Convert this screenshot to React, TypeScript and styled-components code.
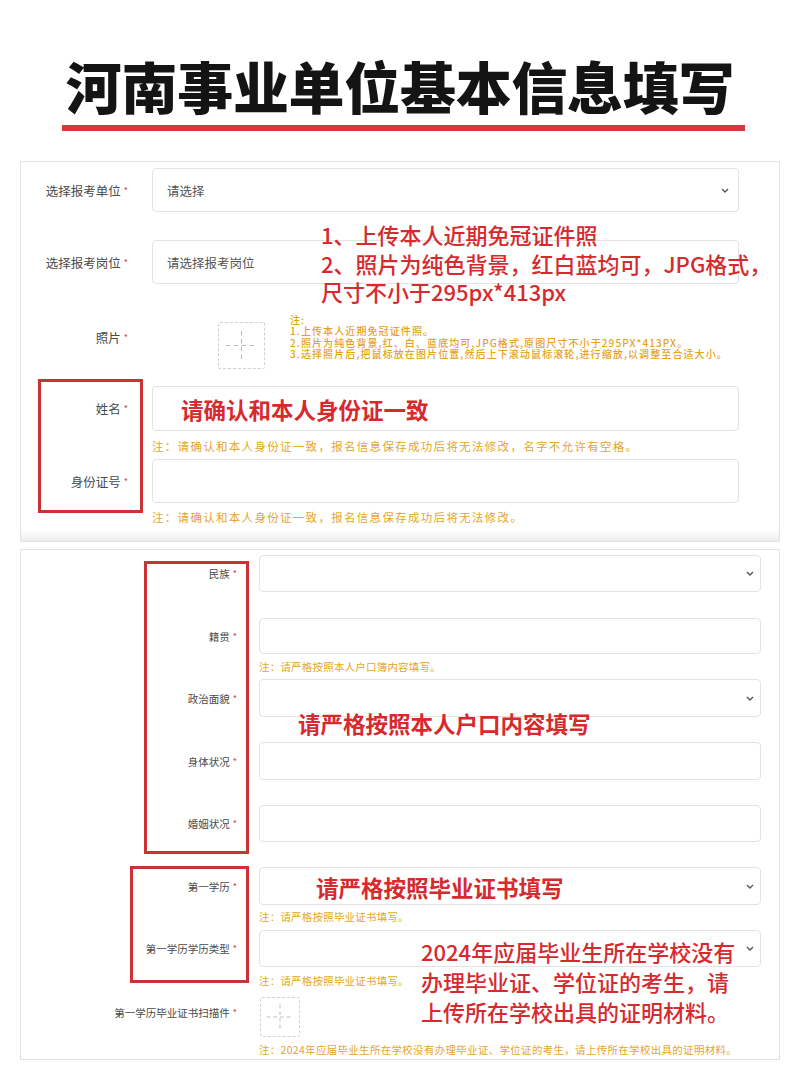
import styled, { createGlobalStyle } from "styled-components";

const GlobalStyle = createGlobalStyle`
  html, body {
    margin: 0;
    padding: 0;
    background: #ffffff;
  }
  body {
    font-family: "Noto Sans CJK SC", "Noto Sans", sans-serif;
    color: #444;
  }
`;

// Reference sheet: Henan public-institution registration form, annotated in red.
export default function App() {
  return (
    <Page>
      <GlobalStyle />
      <Title>河南事业单位基本信息填写</Title>
      <TitleRule />

      <Panel $top={30} $pad="6px 40px 0 0">
        <Field $labelW={107} $gap={24}>
          <Label $h={44} $size={12.5}>选择报考单位<Req>*</Req></Label>
          <Control $h={44} $size={12.5} $chevRight={9}>
            请选择
            <Chevron />
          </Control>
        </Field>

        <Field $labelW={107} $gap={24} $mt={28}>
          <Label $h={44} $size={12.5}>选择报考岗位<Req>*</Req></Label>
          <Control $h={44} $size={12.5}>请选择报考岗位</Control>
        </Field>

        <Field $labelW={107} $gap={24} $mt={30}>
          <Label $h={46} $size={12.5}>照片<Req>*</Req></Label>
          <PhotoRow>
            <UploadBox $size={47} $ml={66} $mt={8}>
              <Cross />
            </UploadBox>
            <PhotoNotes>
              <div>注:</div>
              <div>1.上传本人近期免冠证件照。</div>
              <div>2.照片为纯色背景,红、白、蓝底均可,JPG格式,原图尺寸不小于295PX*413PX。</div>
              <div>3.选择照片后,把鼠标放在图片位置,然后上下滚动鼠标滚轮,进行缩放,以调整至合适大小。</div>
            </PhotoNotes>
          </PhotoRow>
        </Field>

        <Field $labelW={107} $gap={24} $mt={17}>
          <Label $h={45} $size={12.5}>姓名<Req>*</Req></Label>
          <div>
            <Control $h={45} $size={12.5} />
            <Note $mt={8} $size={11.5} $lh={14} $spacing={1.3}>
              注：请确认和本人身份证一致，报名信息保存成功后将无法修改，名字不允许有空格。
            </Note>
          </div>
        </Field>

        <Field $labelW={107} $gap={24} $mt={6}>
          <Label $h={44} $size={12.5}>身份证号<Req>*</Req></Label>
          <div>
            <Control $h={44} $size={12.5} />
            <Note $mt={7} $size={11.5} $lh={14} $spacing={1.3}>
              注：请确认和本人身份证一致，报名信息保存成功后将无法修改。
            </Note>
          </div>
        </Field>

        <PanelFoot />

        <RedBox $x={17} $y={217} $w={105} $h={134} />
        <Callout $x={300} $y={58} $size={22} $lh={28.5} $weight={500}>
          1、上传本人近期免冠证件照
          <br />
          2、照片为纯色背景，红白蓝均可，JPG格式，
          <br />
          尺寸不小于295px*413px
        </Callout>
        <Callout $x={160} $y={233} $size={22.5} $lh={28} $weight={700}>
          请确认和本人身份证一致
        </Callout>
      </Panel>

      <Panel $top={7} $pad="5px 18px 3px 0">
        <Field $labelW={216} $gap={22}>
          <Label $h={37} $size={10.5}>民族<Req>*</Req></Label>
          <Control $h={37} $chevRight={6}>
            <Chevron />
          </Control>
        </Field>

        <Field $labelW={216} $gap={22} $mt={26}>
          <Label $h={36} $size={10.5}>籍贯<Req>*</Req></Label>
          <div>
            <Control $h={36} />
            <Note $mt={7} $size={10.5} $lh={12} $spacing={0.2}>
              注：请严格按照本人户口簿内容填写。
            </Note>
          </div>
        </Field>

        <Field $labelW={216} $gap={22} $mt={6}>
          <Label $h={38} $size={10.5}>政治面貌<Req>*</Req></Label>
          <Control $h={38} $chevRight={6}>
            <Chevron />
          </Control>
        </Field>

        <Field $labelW={216} $gap={22} $mt={25}>
          <Label $h={38} $size={10.5}>身体状况<Req>*</Req></Label>
          <Control $h={38} />
        </Field>

        <Field $labelW={216} $gap={22} $mt={25}>
          <Label $h={37} $size={10.5}>婚姻状况<Req>*</Req></Label>
          <Control $h={37} />
        </Field>

        <Field $labelW={216} $gap={22} $mt={25}>
          <Label $h={38} $size={10.5}>第一学历<Req>*</Req></Label>
          <div>
            <Control $h={38} $chevRight={6}>
              <Chevron />
            </Control>
            <Note $mt={6} $size={10.5} $lh={12} $spacing={0.2}>
              注：请严格按照毕业证书填写。
            </Note>
          </div>
        </Field>

        <Field $labelW={216} $gap={22} $mt={7}>
          <Label $h={37} $size={10.5}>第一学历学历类型<Req>*</Req></Label>
          <div>
            <Control $h={37} $chevRight={6}>
              <Chevron />
            </Control>
            <Note $mt={8} $size={10.5} $lh={12} $spacing={0.2}>
              注：请严格按照毕业证书填写。
            </Note>
          </div>
        </Field>

        <Field $labelW={216} $gap={22} $mt={10}>
          <Label $h={30} $size={10.5}>第一学历毕业证书扫描件<Req>*</Req></Label>
          <div>
            <UploadBox $size={40} $ml={1}>
              <Cross />
            </UploadBox>
            <Note $mt={7} $size={10.5} $lh={12} $spacing={0.3}>
              注：2024年应届毕业生所在学校没有办理毕业证、学位证的考生，请上传所在学校出具的证明材料。
            </Note>
          </div>
        </Field>

        <RedBox $x={123} $y={11} $w={105} $h={293} />
        <RedBox $x={109} $y={316} $w={119} $h={117} />
        <Callout $x={277} $y={159} $size={22.5} $lh={28} $weight={700}>
          请严格按照本人户口内容填写
        </Callout>
        <Callout $x={295} $y={323} $size={22.5} $lh={28} $weight={700}>
          请严格按照毕业证书填写
        </Callout>
        <Callout $x={400} $y={386} $size={22} $lh={30} $weight={500}>
          2024年应届毕业生所在学校没有
          <br />
          办理毕业证、学位证的考生，请
          <br />
          上传所在学校出具的证明材料。
        </Callout>
      </Panel>
    </Page>
  );
}

function Chevron() {
  return (
    <ChevronSvg width="8" height="5" viewBox="0 0 8 5">
      <polyline points="1,1 4,4 7,1" fill="none" stroke="#555" strokeWidth="1.4" />
    </ChevronSvg>
  );
}

function Cross() {
  return (
    <svg width="100%" height="100%" viewBox="0 0 40 40">
      <line x1="20" y1="7" x2="20" y2="33" stroke="#bbb" strokeWidth="1" strokeDasharray="4 3" />
      <line x1="6" y1="20" x2="34" y2="20" stroke="#bbb" strokeWidth="1" strokeDasharray="4 3" />
    </svg>
  );
}

const Page = styled.div`
  width: 800px;
  height: 1069px;
  overflow: hidden;
  display: flex;
  flex-direction: column;
  background: #ffffff;
`;

const Title = styled.h1`
  margin: 57px 0 0;
  text-align: center;
  font-family: "Noto Sans CJK SC", "Noto Sans", sans-serif;
  font-size: 56px;
  line-height: 56px;
  font-weight: 900;
  color: #141414;
  letter-spacing: -0.3px;
`;

const TitleRule = styled.div`
  margin: 12px 0 0 62px;
  width: 683px;
  height: 6px;
  background: #d9363e;
`;

const Panel = styled.section<{ $top: number; $pad: string }>`
  position: relative;
  margin: ${(p) => p.$top}px 20px 0;
  padding: ${(p) => p.$pad};
  border: 1px solid #e2e2e2;
  background: #ffffff;
`;

const PanelFoot = styled.div`
  margin: 6px -40px 0 0;
  height: 11px;
  background: linear-gradient(#ffffff, #ececec);
`;

const Field = styled.div<{ $labelW: number; $gap: number; $mt?: number }>`
  display: grid;
  grid-template-columns: ${(p) => p.$labelW}px 1fr;
  column-gap: ${(p) => p.$gap}px;
  align-items: start;
  margin-top: ${(p) => p.$mt ?? 0}px;
`;

const Label = styled.div<{ $h: number; $size: number }>`
  height: ${(p) => p.$h}px;
  display: flex;
  align-items: center;
  justify-content: flex-end;
  font-size: ${(p) => p.$size}px;
  color: #4a4a4a;
  white-space: nowrap;
`;

const Req = styled.span`
  color: #e0393e;
  font-size: 9px;
  margin-left: 3px;
  line-height: 1;
`;

const Control = styled.div<{ $h: number; $size?: number; $chevRight?: number }>`
  box-sizing: border-box;
  height: ${(p) => p.$h}px;
  display: flex;
  align-items: center;
  padding: 0 ${(p) => p.$chevRight ?? 14}px 0 14px;
  border: 1px solid #e3e3e3;
  border-radius: 4px;
  background: #ffffff;
  font-size: ${(p) => p.$size ?? 12}px;
  color: #555;
`;

const ChevronSvg = styled.svg`
  margin-left: auto;
  flex: none;
`;

const PhotoRow = styled.div`
  display: flex;
  align-items: flex-start;
`;

const UploadBox = styled.div<{ $size: number; $ml?: number; $mt?: number }>`
  box-sizing: border-box;
  width: ${(p) => p.$size}px;
  height: ${(p) => p.$size}px;
  margin: ${(p) => p.$mt ?? 0}px 0 0 ${(p) => p.$ml ?? 0}px;
  border: 1px dashed #d0d0d0;
  border-radius: 2px;
  flex: none;
  display: flex;
`;

const PhotoNotes = styled.div`
  margin-left: 25px;
  font-size: 10px;
  line-height: 11.3px;
  letter-spacing: 1.1px;
  font-weight: 500;
  color: #e6a11c;
  white-space: nowrap;
`;

const Note = styled.div<{ $mt: number; $size: number; $lh: number; $spacing: number }>`
  margin-top: ${(p) => p.$mt}px;
  font-size: ${(p) => p.$size}px;
  line-height: ${(p) => p.$lh}px;
  letter-spacing: ${(p) => p.$spacing}px;
  color: #e6a52a;
  white-space: nowrap;
`;

const RedBox = styled.div<{ $x: number; $y: number; $w: number; $h: number }>`
  position: absolute;
  left: ${(p) => p.$x}px;
  top: ${(p) => p.$y}px;
  width: ${(p) => p.$w}px;
  height: ${(p) => p.$h}px;
  box-sizing: border-box;
  border: 3px solid #c93336;
  pointer-events: none;
`;

const Callout = styled.div<{ $x: number; $y: number; $size: number; $lh: number; $weight: number }>`
  position: absolute;
  left: ${(p) => p.$x}px;
  top: ${(p) => p.$y}px;
  font-family: "Noto Sans CJK SC", "Noto Sans", sans-serif;
  font-size: ${(p) => p.$size}px;
  line-height: ${(p) => p.$lh}px;
  font-weight: ${(p) => p.$weight};
  color: #d62a2f;
  white-space: nowrap;
  pointer-events: none;
`;
